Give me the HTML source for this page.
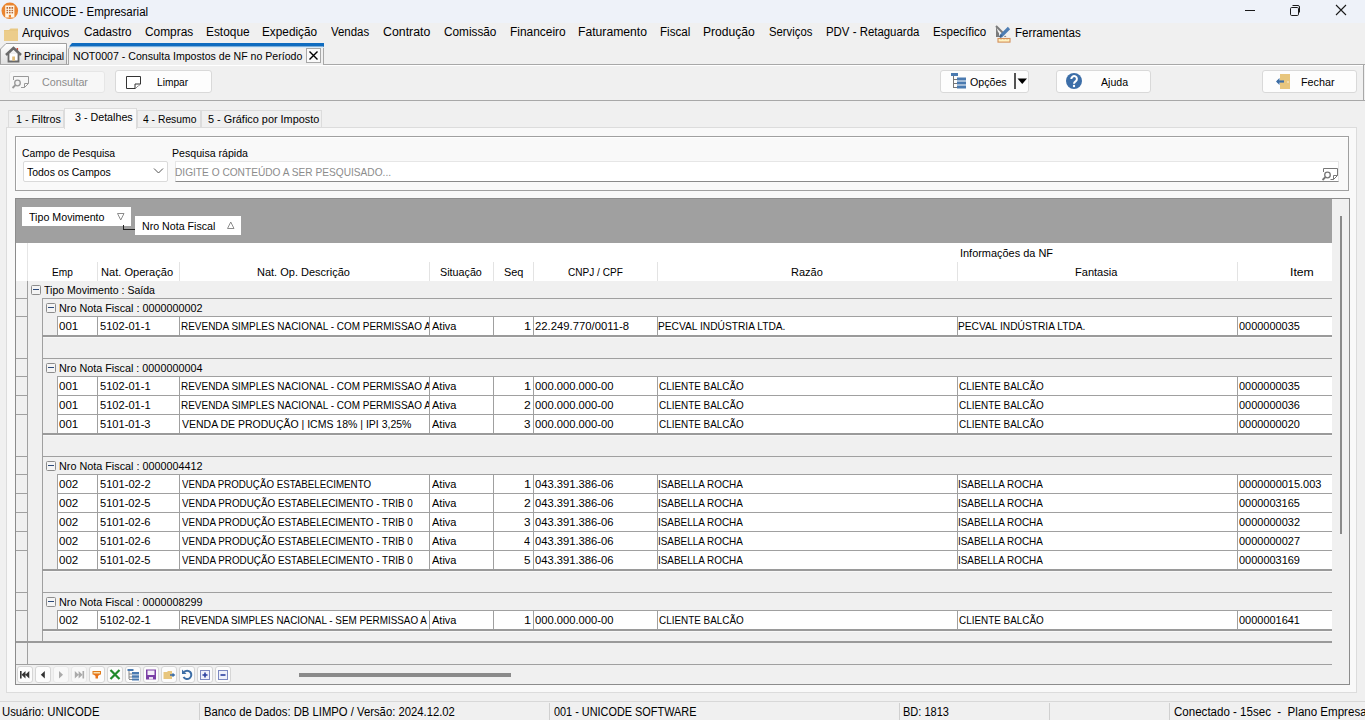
<!DOCTYPE html>
<html><head><meta charset="utf-8"><style>
html,body{margin:0;padding:0;}
body{width:1365px;height:720px;overflow:hidden;position:relative;background:#f0f0f0;font-family:'Liberation Sans', sans-serif;}
.a{position:absolute;}
.t{white-space:pre;transform-origin:0 0;}
</style></head><body>
<div class="a" style="left:0px;top:0px;width:1365px;height:23px;background:#eef2f9;"></div>
<svg class="a" style="left:1px;top:2px" width="18" height="18" viewBox="0 0 18 18"><circle cx="8.8" cy="8.8" r="8.3" fill="#ea8530"/><rect x="4.2" y="3.5" width="9.2" height="12" fill="#fff6e6"/><g fill="#b86a38"><rect x="5.5" y="5" width="1.6" height="1.8"/><rect x="8" y="5" width="1.6" height="1.8"/><rect x="10.5" y="5" width="1.6" height="1.8"/><rect x="5.5" y="7.8" width="1.6" height="1.4"/><rect x="8" y="7.8" width="1.6" height="1.4"/><rect x="10.5" y="7.8" width="1.6" height="1.4"/><rect x="5.5" y="10" width="1.6" height="1.4"/><rect x="8" y="10" width="1.6" height="1.4"/><rect x="10.5" y="10" width="1.6" height="1.4"/></g><rect x="7.8" y="12.8" width="2.2" height="2.7" fill="#ea8530"/></svg>
<div class="a t" style="left:23.11px;top:5.84px;font-size:12px;line-height:12px;color:#000;transform:scaleX(0.9627);">UNICODE - Empresarial</div>
<div class="a" style="left:1245px;top:10px;width:10px;height:1px;background:#1a1a1a;"></div>
<svg class="a" style="left:1288px;top:3px" width="14" height="14" viewBox="0 0 14 14"><rect x="2.5" y="4.5" width="8" height="8" rx="1.2" fill="none" stroke="#1a1a1a" stroke-width="1"/><path d="M4.5 2.5 H10 a1.5 1.5 0 0 1 1.5 1.5 V9.5" fill="none" stroke="#1a1a1a" stroke-width="1"/></svg>
<svg class="a" style="left:1334px;top:3px" width="14" height="14" viewBox="0 0 14 14"><path d="M2 2 L12 12 M12 2 L2 12" stroke="#1a1a1a" stroke-width="1.1"/></svg>
<svg class="a" style="left:3px;top:27px" width="16" height="15" viewBox="0 0 16 15"><path d="M1 3 H6 L7.5 1.5 H15 V14 H1 Z" fill="#e8c883"/><rect x="1" y="4" width="14" height="10" fill="#eccd8b"/></svg>
<div class="a t" style="left:22.18px;top:26.84px;font-size:12px;line-height:12px;color:#000;transform:scaleX(1.0123);">Arquivos</div>
<div class="a t" style="left:83.70px;top:25.84px;font-size:12px;line-height:12px;color:#000;transform:scaleX(0.9773);">Cadastro</div>
<div class="a t" style="left:145.00px;top:25.84px;font-size:12px;line-height:12px;color:#000;transform:scaleX(0.9908);">Compras</div>
<div class="a t" style="left:206.33px;top:25.84px;font-size:12px;line-height:12px;color:#000;transform:scaleX(0.9902);">Estoque</div>
<div class="a t" style="left:262.23px;top:25.84px;font-size:12px;line-height:12px;color:#000;transform:scaleX(0.9826);">Expedição</div>
<div class="a t" style="left:331.25px;top:25.84px;font-size:12px;line-height:12px;color:#000;transform:scaleX(0.9532);">Vendas</div>
<div class="a t" style="left:382.87px;top:25.84px;font-size:12px;line-height:12px;color:#000;transform:scaleX(1.0287);">Contrato</div>
<div class="a t" style="left:443.90px;top:25.84px;font-size:12px;line-height:12px;color:#000;transform:scaleX(0.9821);">Comissão</div>
<div class="a t" style="left:509.52px;top:25.84px;font-size:12px;line-height:12px;color:#000;transform:scaleX(0.9938);">Financeiro</div>
<div class="a t" style="left:578.40px;top:25.84px;font-size:12px;line-height:12px;color:#000;transform:scaleX(1.0144);">Faturamento</div>
<div class="a t" style="left:660.45px;top:25.84px;font-size:12px;line-height:12px;color:#000;transform:scaleX(0.9679);">Fiscal</div>
<div class="a t" style="left:703.41px;top:25.84px;font-size:12px;line-height:12px;color:#000;transform:scaleX(1.0084);">Produção</div>
<div class="a t" style="left:768.89px;top:25.84px;font-size:12px;line-height:12px;color:#000;transform:scaleX(0.9415);">Serviços</div>
<div class="a t" style="left:825.56px;top:25.84px;font-size:12px;line-height:12px;color:#000;transform:scaleX(0.9519);">PDV - Retaguarda</div>
<div class="a t" style="left:932.65px;top:25.84px;font-size:12px;line-height:12px;color:#000;transform:scaleX(0.9616);">Específico</div>
<svg class="a" style="left:995px;top:24px" width="18" height="20" viewBox="0 0 18 20"><path d="M1 2 V13 H7.5 L6 11.5 L4 12 L4 9 L3 8 Z" fill="#7a7a7a"/><path d="M1 2 L9 10" stroke="#7a7a7a" stroke-width="2"/><path d="M9 13 H11.5 L10 11.5 Z" fill="#7a7a7a"/><path d="M5.5 12.5 L14 4" stroke="#4d7db3" stroke-width="3.2"/><path d="M5 13.5 L6.5 11" stroke="#3a5f8a" stroke-width="1.5"/><rect x="3" y="14.5" width="12" height="3.6" fill="#fff2c0" stroke="#d4905a" stroke-width="1.1"/><path d="M6 14.5 V15.6 M9 14.5 V15.6 M12 14.5 V15.6" stroke="#d4905a" stroke-width="0.8"/></svg>
<div class="a t" style="left:1014.75px;top:26.84px;font-size:12px;line-height:12px;color:#000;transform:scaleX(0.9654);">Ferramentas</div>
<svg class="a" style="left:0px;top:43px" width="68" height="22" viewBox="0 0 68 22"><defs><linearGradient id="pg" x1="0" y1="0" x2="0" y2="1"><stop offset="0" stop-color="#ffffff"/><stop offset="1" stop-color="#dedede"/></linearGradient></defs><path d="M0.5 21.5 V6 L6 0.5 H66.5 V21.5 Z" fill="url(#pg)" stroke="#a0a0a0" stroke-width="1"/></svg>
<svg class="a" style="left:5px;top:46px" width="17" height="17" viewBox="0 0 17 17"><rect x="11.5" y="2" width="1.6" height="4" fill="#d04b3a"/><path d="M3.5 8 V15.5 H13.5 V8" fill="#fff" stroke="#6a6a6a" stroke-width="1.8"/><path d="M1 9 L8.5 2 L16 9" fill="none" stroke="#6a6a6a" stroke-width="2.6"/><rect x="7.2" y="10.5" width="2.8" height="4.2" fill="#e2be7a"/></svg>
<div class="a t" style="left:24.14px;top:50.69px;font-size:11px;line-height:11px;color:#000;transform:scaleX(0.9495);">Principal</div>
<svg class="a" style="left:66px;top:42px" width="260" height="24" viewBox="0 0 260 24"><path d="M2.5 23 V7 L7.5 1.5 H257.5 V23" fill="#f0f0f0" stroke="#a8a8a8" stroke-width="1"/><path d="M6 1 H258 V4.5 H3 Z" fill="#0f6cc0"/><rect x="5" y="5" width="253" height="1" fill="#d8ecfa"/></svg>
<div class="a t" style="left:73.13px;top:50.69px;font-size:11px;line-height:11px;color:#000;transform:scaleX(0.9617);">NOT0007 - Consulta Impostos de NF no Período</div>
<svg class="a" style="left:306px;top:48px" width="16" height="16" viewBox="0 0 16 16"><rect x="0.5" y="0.5" width="14" height="14" fill="#fafafa" stroke="#a8a8a8"/><path d="M3.5 3.5 L11.5 11.5 M11.5 3.5 L3.5 11.5" stroke="#000" stroke-width="1.4"/></svg>
<div class="a" style="left:0px;top:64px;width:68px;height:1px;background:#a8a8a8;"></div>
<div class="a" style="left:323px;top:64px;width:1042px;height:1px;background:#a8a8a8;"></div>
<div class="a" style="left:0px;top:65px;width:1364px;height:1px;background:#ffffff;"></div>
<div class="a" style="left:0px;top:100px;width:1365px;height:1px;background:#a8a8a8;"></div>
<div class="a" style="left:1363px;top:64px;width:1px;height:37px;background:#a8a8a8;"></div>
<div class="a" style="left:9px;top:71px;width:96px;height:22px;background:#f7f7f7;border:1px solid #e6e6e6;box-sizing:border-box;border-radius:3px;"></div>
<svg class="a" style="left:11px;top:75px" width="18" height="15" viewBox="0 0 18 15"><path d="M2.5 5 V1.5 H17.5 V8.5 L13.5 12.5 H10" fill="none" stroke="#999" stroke-width="1"/><path d="M17.5 8.5 H13.5 V12.5" fill="none" stroke="#999"/><circle cx="6.5" cy="8" r="2.8" fill="#f4f4f4" stroke="#999" stroke-width="1.3"/><path d="M4.5 10 L1.5 13" stroke="#999" stroke-width="1.8"/></svg>
<div class="a t" style="left:42.16px;top:76.69px;font-size:11px;line-height:11px;color:#8c8c8c;transform:scaleX(0.9755);">Consultar</div>
<div class="a" style="left:115px;top:70px;width:97px;height:23px;background:#fdfdfd;border:1px solid #d9d9d9;box-sizing:border-box;border-radius:3px;"></div>
<svg class="a" style="left:125px;top:75px" width="17" height="15" viewBox="0 0 17 15"><path d="M1.5 1.5 H15.5 V9 L10 13.5 H1.5 Z" fill="#fff" stroke="#333" stroke-width="1"/><path d="M15.5 9 H10 V13.5" fill="#fff" stroke="#333"/></svg>
<div class="a t" style="left:156.87px;top:76.69px;font-size:11px;line-height:11px;color:#000;transform:scaleX(0.9251);">Limpar</div>
<div class="a" style="left:940px;top:70px;width:89px;height:23px;background:#fdfdfd;border:1px solid #d9d9d9;box-sizing:border-box;border-radius:3px;"></div>
<svg class="a" style="left:950px;top:72px" width="17" height="18" viewBox="0 0 17 18"><path d="M3.5 3 V16 M3.5 7.5 H7 M3.5 11.5 H7 M3.5 15.5 H7" stroke="#777" stroke-width="1"/><rect x="1" y="1" width="7" height="3" fill="#4a7ab0"/><rect x="7" y="5.5" width="9" height="3" fill="#4a7ab0"/><rect x="7" y="9.5" width="9" height="3" fill="#4a7ab0"/><rect x="7" y="13.5" width="9" height="3" fill="#4a7ab0"/></svg>
<div class="a t" style="left:969.90px;top:76.69px;font-size:11px;line-height:11px;color:#000;transform:scaleX(0.9678);">Opções</div>
<div class="a" style="left:1014px;top:73px;width:2px;height:16px;background:#555;"></div>
<svg class="a" style="left:1017px;top:78px" width="11" height="7" viewBox="0 0 11 7"><path d="M0.5 0.5 H10 L5.25 6 Z" fill="#000"/></svg>
<div class="a" style="left:1056px;top:70px;width:95px;height:23px;background:#fdfdfd;border:1px solid #d9d9d9;box-sizing:border-box;border-radius:3px;"></div>
<svg class="a" style="left:1065px;top:72px" width="18" height="18" viewBox="0 0 18 18"><circle cx="9" cy="9" r="8" fill="#3c6ea8"/><path d="M6.3 7 a2.8 2.8 0 1 1 4.3 2.3 c-1 0.7 -1.6 1.1 -1.6 2.4" fill="none" stroke="#fff" stroke-width="2"/><circle cx="9" cy="14" r="1.2" fill="#fff"/></svg>
<div class="a t" style="left:1100.98px;top:76.69px;font-size:11px;line-height:11px;color:#000;transform:scaleX(0.9604);">Ajuda</div>
<div class="a" style="left:1262px;top:70px;width:95px;height:23px;background:#fdfdfd;border:1px solid #d9d9d9;box-sizing:border-box;border-radius:3px;"></div>
<svg class="a" style="left:1275px;top:73px" width="17" height="17" viewBox="0 0 17 17"><rect x="5" y="1" width="10" height="15" fill="#e8c67d"/><circle cx="13" cy="9" r="0.7" fill="#fff"/><path d="M2 8.5 H9" stroke="#3d6ea6" stroke-width="2.2"/><path d="M1 8.5 L4.5 5 V12 Z" fill="#3d6ea6"/></svg>
<div class="a t" style="left:1300.72px;top:76.69px;font-size:11px;line-height:11px;color:#000;transform:scaleX(0.9774);">Fechar</div>
<div class="a" style="left:6px;top:127px;width:1351px;height:566px;background:#f9f9f9;border:1px solid #dcdcdc;box-sizing:border-box;"></div>
<div class="a" style="left:8px;top:110px;width:56px;height:18px;background:#f0f0f0;border:1px solid #dcdcdc;box-sizing:border-box;"></div>
<div class="a t" style="left:15.88px;top:113.69px;font-size:11px;line-height:11px;color:#000;transform:scaleX(0.9775);">1 - Filtros</div>
<div class="a" style="left:137px;top:110px;width:64px;height:18px;background:#f0f0f0;border:1px solid #dcdcdc;box-sizing:border-box;"></div>
<div class="a t" style="left:143.06px;top:113.69px;font-size:11px;line-height:11px;color:#000;transform:scaleX(0.9387);">4 - Resumo</div>
<div class="a" style="left:201px;top:110px;width:121px;height:18px;background:#f0f0f0;border:1px solid #dcdcdc;box-sizing:border-box;"></div>
<div class="a t" style="left:208.36px;top:113.69px;font-size:11px;line-height:11px;color:#000;transform:scaleX(0.9894);">5 - Gráfico por Imposto</div>
<div class="a" style="left:64px;top:108px;width:73px;height:21px;background:#f9f9f9;border:1px solid #dcdcdc;box-sizing:border-box;border-bottom:none;"></div>
<div class="a t" style="left:74.89px;top:111.69px;font-size:11px;line-height:11px;color:#000;transform:scaleX(0.9728);">3 - Detalhes</div>
<div class="a" style="left:15px;top:136px;width:1334px;height:55px;border:1px solid #a0a0a0;box-sizing:border-box;box-shadow: inset 1px 1px 0 #fff;"></div>
<div class="a t" style="left:22.17px;top:147.69px;font-size:11px;line-height:11px;color:#000;transform:scaleX(0.9401);">Campo de Pesquisa</div>
<div class="a t" style="left:172.33px;top:147.69px;font-size:11px;line-height:11px;color:#000;transform:scaleX(0.9630);">Pesquisa rápida</div>
<div class="a" style="left:23px;top:161px;width:145px;height:21px;background:#ffffff;border:1px solid #dadada;box-sizing:border-box;border-radius:2px;"></div>
<div class="a t" style="left:26.87px;top:166.69px;font-size:11px;line-height:11px;color:#000;transform:scaleX(0.9508);">Todos os Campos</div>
<svg class="a" style="left:153px;top:167px" width="11" height="8" viewBox="0 0 11 8"><path d="M1 1.5 L5.5 6 L10 1.5" fill="none" stroke="#555" stroke-width="1"/></svg>
<div class="a" style="left:175px;top:161px;width:1164px;height:21px;background:#ffffff;border:1px solid #e6e6e6;box-sizing:border-box;border-bottom:1px solid #8a8a8a;"></div>
<div class="a t" style="left:175.47px;top:166.69px;font-size:11px;line-height:11px;color:#8c8c8c;transform:scaleX(0.9229);">DIGITE O CONTEÚDO A SER PESQUISADO...</div>
<svg class="a" style="left:1321px;top:167px" width="18" height="15" viewBox="0 0 18 15"><path d="M2.5 5 V1.5 H16.5 V8.5 L12.5 12.5 H9.5" fill="none" stroke="#777" stroke-width="1"/><path d="M16.5 8.5 H12.5 V12.5" fill="none" stroke="#777"/><circle cx="6.5" cy="8" r="2.8" fill="#fff" stroke="#777" stroke-width="1.3"/><path d="M4.5 10 L1.5 13" stroke="#777" stroke-width="1.8"/></svg>
<div class="a" style="left:15px;top:198px;width:1335px;height:487px;background:#f0f0f0;border:1px solid #8c8c8c;box-sizing:border-box;"></div>
<div class="a" style="left:16px;top:199px;width:1316px;height:44px;background:#a0a0a0;"></div>
<div class="a" style="left:22px;top:207px;width:109px;height:19px;background:#ffffff;"></div>
<div class="a t" style="left:28.76px;top:211.69px;font-size:11px;line-height:11px;color:#000;transform:scaleX(0.9697);">Tipo Movimento</div>
<svg class="a" style="left:116px;top:212px" width="9" height="9" viewBox="0 0 9 9"><path d="M1.5 1.5 H8 L4.75 8 Z" fill="none" stroke="#808080" stroke-width="0.9"/></svg>
<div class="a" style="left:123px;top:225px;width:1px;height:5px;background:#222;"></div>
<div class="a" style="left:123px;top:229px;width:12px;height:1px;background:#222;"></div>
<div class="a" style="left:135px;top:216px;width:106px;height:19px;background:#ffffff;"></div>
<div class="a t" style="left:141.63px;top:220.69px;font-size:11px;line-height:11px;color:#000;transform:scaleX(0.9682);">Nro Nota Fiscal</div>
<svg class="a" style="left:226px;top:221px" width="9" height="9" viewBox="0 0 9 9"><path d="M1.5 7.5 H8 L4.75 1 Z" fill="none" stroke="#808080" stroke-width="0.9"/></svg>
<div class="a" style="left:1332px;top:199px;width:17px;height:466px;background:#f0f0f0;"></div>
<div class="a" style="left:1340px;top:216px;width:2px;height:318px;background:#8a8a8a;"></div>
<div class="a" style="left:16px;top:243px;width:1316px;height:38px;background:#ffffff;"></div>
<div class="a t" style="left:960.19px;top:247.69px;font-size:11px;line-height:11px;color:#000;transform:scaleX(0.9937);">Informações da NF</div>
<div class="a" style="left:97px;top:262px;width:1px;height:19px;background:#e3e3e3;"></div>
<div class="a" style="left:179px;top:262px;width:1px;height:19px;background:#e3e3e3;"></div>
<div class="a" style="left:429px;top:262px;width:1px;height:19px;background:#e3e3e3;"></div>
<div class="a" style="left:493px;top:262px;width:1px;height:19px;background:#e3e3e3;"></div>
<div class="a" style="left:533px;top:262px;width:1px;height:19px;background:#e3e3e3;"></div>
<div class="a" style="left:657px;top:262px;width:1px;height:19px;background:#e3e3e3;"></div>
<div class="a" style="left:957px;top:262px;width:1px;height:19px;background:#e3e3e3;"></div>
<div class="a" style="left:1237px;top:262px;width:1px;height:19px;background:#e3e3e3;"></div>
<div class="a t" style="left:51.57px;top:266.69px;font-size:11px;line-height:11px;color:#000;transform:scaleX(0.9222);">Emp</div>
<div class="a t" style="left:101.39px;top:266.69px;font-size:11px;line-height:11px;color:#000;transform:scaleX(1.0075);">Nat. Operação</div>
<div class="a t" style="left:257.10px;top:266.69px;font-size:11px;line-height:11px;color:#000;transform:scaleX(0.9994);">Nat. Op. Descrição</div>
<div class="a t" style="left:439.81px;top:266.69px;font-size:11px;line-height:11px;color:#000;transform:scaleX(0.9774);">Situação</div>
<div class="a t" style="left:503.71px;top:266.69px;font-size:11px;line-height:11px;color:#000;transform:scaleX(0.9908);">Seq</div>
<div class="a t" style="left:567.89px;top:266.69px;font-size:11px;line-height:11px;color:#000;transform:scaleX(0.9152);">CNPJ / CPF</div>
<div class="a t" style="left:791.10px;top:266.69px;font-size:11px;line-height:11px;color:#000;transform:scaleX(0.9989);">Razão</div>
<div class="a t" style="left:1075.09px;top:266.69px;font-size:11px;line-height:11px;color:#000;transform:scaleX(1.0051);">Fantasia</div>
<div class="a t" style="left:1290.07px;top:266.69px;font-size:11px;line-height:11px;color:#000;transform:scaleX(1.1093);">Item</div>
<div class="a" style="left:27px;top:243px;width:1px;height:38px;background:#e6e6e6;"></div>
<div class="a" style="left:27px;top:281px;width:1px;height:383px;background:#a0a0a0;"></div>
<svg class="a" style="left:31px;top:285px" width="10" height="10" viewBox="0 0 10 10"><rect x="0.5" y="0.5" width="9" height="9" rx="1" fill="#f4f4f4" stroke="#8c8c8c"/><path d="M2 4.5 H8" stroke="#2c4a7a" stroke-width="1"/></svg>
<div class="a t" style="left:44.16px;top:284.69px;font-size:11px;line-height:11px;color:#000;transform:scaleX(0.9584);">Tipo Movimento : Saída</div>
<div class="a" style="left:42px;top:298px;width:1px;height:343px;background:#a0a0a0;"></div>
<div class="a" style="left:42px;top:298px;width:1290px;height:1px;background:#a0a0a0;"></div>
<div class="a" style="left:16px;top:298px;width:11px;height:1px;background:#a0a0a0;"></div>
<svg class="a" style="left:46px;top:303px" width="10" height="10" viewBox="0 0 10 10"><rect x="0.5" y="0.5" width="9" height="9" rx="1" fill="#f4f4f4" stroke="#8c8c8c"/><path d="M2 4.5 H8" stroke="#2c4a7a" stroke-width="1"/></svg>
<div class="a t" style="left:58.71px;top:302.69px;font-size:11px;line-height:11px;color:#000;transform:scaleX(0.9828);">Nro Nota Fiscal : 0000000002</div>
<div class="a" style="left:57px;top:316px;width:1275px;height:19px;background:#ffffff;"></div>
<div class="a" style="left:57px;top:316px;width:1275px;height:1px;background:#a0a0a0;"></div>
<div class="a" style="left:16px;top:316px;width:11px;height:1px;background:#a0a0a0;"></div>
<div class="a t" style="left:59.15px;top:320.69px;font-size:11px;line-height:11px;color:#000;transform:scaleX(1.0468);">001</div>
<div class="a t" style="left:99.96px;top:320.69px;font-size:11px;line-height:11px;color:#000;transform:scaleX(1.0087);">5102-01-1</div>
<div class="a" style="left:180px;top:316px;width:249px;height:19px;overflow:hidden">
<div class="a t" style="left:0.88px;top:4.69px;font-size:11px;line-height:11px;color:#000;transform:scaleX(0.9057);">REVENDA SIMPLES NACIONAL - COM PERMISSAO A</div>
</div>
<div class="a t" style="left:431.58px;top:320.69px;font-size:11px;line-height:11px;color:#000;transform:scaleX(0.9986);">Ativa</div>
<div class="a t" style="left:523.53px;top:320.69px;font-size:11px;line-height:11px;color:#000;transform:scaleX(1.1597);">1</div>
<div class="a t" style="left:535.23px;top:320.69px;font-size:11px;line-height:11px;color:#000;transform:scaleX(1.0264);">22.249.770/0011-8</div>
<div class="a t" style="left:658.46px;top:320.69px;font-size:11px;line-height:11px;color:#000;transform:scaleX(0.9279);">PECVAL INDÚSTRIA LTDA.</div>
<div class="a t" style="left:958.46px;top:320.69px;font-size:11px;line-height:11px;color:#000;transform:scaleX(0.9279);">PECVAL INDÚSTRIA LTDA.</div>
<div class="a t" style="left:1239.27px;top:320.69px;font-size:11px;line-height:11px;color:#000;transform:scaleX(0.9953);">0000000035</div>
<div class="a" style="left:57px;top:316px;width:1px;height:19px;background:#a0a0a0;"></div>
<div class="a" style="left:97px;top:316px;width:1px;height:19px;background:#a0a0a0;"></div>
<div class="a" style="left:179px;top:316px;width:1px;height:19px;background:#a0a0a0;"></div>
<div class="a" style="left:429px;top:316px;width:1px;height:19px;background:#a0a0a0;"></div>
<div class="a" style="left:493px;top:316px;width:1px;height:19px;background:#a0a0a0;"></div>
<div class="a" style="left:533px;top:316px;width:1px;height:19px;background:#a0a0a0;"></div>
<div class="a" style="left:657px;top:316px;width:1px;height:19px;background:#a0a0a0;"></div>
<div class="a" style="left:957px;top:316px;width:1px;height:19px;background:#a0a0a0;"></div>
<div class="a" style="left:1237px;top:316px;width:1px;height:19px;background:#a0a0a0;"></div>
<div class="a" style="left:42px;top:335px;width:1290px;height:2px;background:#9a9a9a;"></div>
<div class="a" style="left:43px;top:337px;width:1289px;height:1px;background:#f8f8f8;"></div>
<div class="a" style="left:42px;top:358px;width:1290px;height:1px;background:#a0a0a0;"></div>
<div class="a" style="left:16px;top:358px;width:11px;height:1px;background:#a0a0a0;"></div>
<svg class="a" style="left:46px;top:363px" width="10" height="10" viewBox="0 0 10 10"><rect x="0.5" y="0.5" width="9" height="9" rx="1" fill="#f4f4f4" stroke="#8c8c8c"/><path d="M2 4.5 H8" stroke="#2c4a7a" stroke-width="1"/></svg>
<div class="a t" style="left:58.71px;top:362.69px;font-size:11px;line-height:11px;color:#000;transform:scaleX(0.9812);">Nro Nota Fiscal : 0000000004</div>
<div class="a" style="left:57px;top:376px;width:1275px;height:57px;background:#ffffff;"></div>
<div class="a" style="left:57px;top:376px;width:1275px;height:1px;background:#a0a0a0;"></div>
<div class="a" style="left:16px;top:376px;width:11px;height:1px;background:#a0a0a0;"></div>
<div class="a t" style="left:59.15px;top:380.69px;font-size:11px;line-height:11px;color:#000;transform:scaleX(1.0468);">001</div>
<div class="a t" style="left:99.96px;top:380.69px;font-size:11px;line-height:11px;color:#000;transform:scaleX(1.0087);">5102-01-1</div>
<div class="a" style="left:180px;top:376px;width:249px;height:19px;overflow:hidden">
<div class="a t" style="left:0.88px;top:4.69px;font-size:11px;line-height:11px;color:#000;transform:scaleX(0.9057);">REVENDA SIMPLES NACIONAL - COM PERMISSAO A</div>
</div>
<div class="a t" style="left:431.58px;top:380.69px;font-size:11px;line-height:11px;color:#000;transform:scaleX(0.9986);">Ativa</div>
<div class="a t" style="left:523.53px;top:380.69px;font-size:11px;line-height:11px;color:#000;transform:scaleX(1.1597);">1</div>
<div class="a t" style="left:535.36px;top:380.69px;font-size:11px;line-height:11px;color:#000;transform:scaleX(1.0182);">000.000.000-00</div>
<div class="a t" style="left:658.80px;top:380.69px;font-size:11px;line-height:11px;color:#000;transform:scaleX(0.8995);">CLIENTE BALCÃO</div>
<div class="a t" style="left:958.80px;top:380.69px;font-size:11px;line-height:11px;color:#000;transform:scaleX(0.8995);">CLIENTE BALCÃO</div>
<div class="a t" style="left:1239.27px;top:380.69px;font-size:11px;line-height:11px;color:#000;transform:scaleX(0.9953);">0000000035</div>
<div class="a" style="left:57px;top:395px;width:1275px;height:1px;background:#a0a0a0;"></div>
<div class="a" style="left:16px;top:395px;width:11px;height:1px;background:#a0a0a0;"></div>
<div class="a t" style="left:59.15px;top:399.69px;font-size:11px;line-height:11px;color:#000;transform:scaleX(1.0468);">001</div>
<div class="a t" style="left:99.96px;top:399.69px;font-size:11px;line-height:11px;color:#000;transform:scaleX(1.0087);">5102-01-1</div>
<div class="a" style="left:180px;top:395px;width:249px;height:19px;overflow:hidden">
<div class="a t" style="left:0.88px;top:4.69px;font-size:11px;line-height:11px;color:#000;transform:scaleX(0.9057);">REVENDA SIMPLES NACIONAL - COM PERMISSAO A</div>
</div>
<div class="a t" style="left:431.58px;top:399.69px;font-size:11px;line-height:11px;color:#000;transform:scaleX(0.9986);">Ativa</div>
<div class="a t" style="left:523.89px;top:399.69px;font-size:11px;line-height:11px;color:#000;transform:scaleX(1.0975);">2</div>
<div class="a t" style="left:535.36px;top:399.69px;font-size:11px;line-height:11px;color:#000;transform:scaleX(1.0182);">000.000.000-00</div>
<div class="a t" style="left:658.80px;top:399.69px;font-size:11px;line-height:11px;color:#000;transform:scaleX(0.8995);">CLIENTE BALCÃO</div>
<div class="a t" style="left:958.80px;top:399.69px;font-size:11px;line-height:11px;color:#000;transform:scaleX(0.8995);">CLIENTE BALCÃO</div>
<div class="a t" style="left:1239.27px;top:399.69px;font-size:11px;line-height:11px;color:#000;transform:scaleX(0.9956);">0000000036</div>
<div class="a" style="left:57px;top:414px;width:1275px;height:1px;background:#a0a0a0;"></div>
<div class="a" style="left:16px;top:414px;width:11px;height:1px;background:#a0a0a0;"></div>
<div class="a t" style="left:59.15px;top:418.69px;font-size:11px;line-height:11px;color:#000;transform:scaleX(1.0468);">001</div>
<div class="a t" style="left:99.96px;top:418.69px;font-size:11px;line-height:11px;color:#000;transform:scaleX(1.0076);">5101-01-3</div>
<div class="a" style="left:180px;top:414px;width:249px;height:19px;overflow:hidden">
<div class="a t" style="left:1.65px;top:4.69px;font-size:11px;line-height:11px;color:#000;transform:scaleX(0.9542);">VENDA DE PRODUÇÃO | ICMS 18% | IPI 3,25%</div>
</div>
<div class="a t" style="left:431.58px;top:418.69px;font-size:11px;line-height:11px;color:#000;transform:scaleX(0.9986);">Ativa</div>
<div class="a t" style="left:524.06px;top:418.69px;font-size:11px;line-height:11px;color:#000;transform:scaleX(1.0546);">3</div>
<div class="a t" style="left:535.36px;top:418.69px;font-size:11px;line-height:11px;color:#000;transform:scaleX(1.0182);">000.000.000-00</div>
<div class="a t" style="left:658.80px;top:418.69px;font-size:11px;line-height:11px;color:#000;transform:scaleX(0.8995);">CLIENTE BALCÃO</div>
<div class="a t" style="left:958.80px;top:418.69px;font-size:11px;line-height:11px;color:#000;transform:scaleX(0.8995);">CLIENTE BALCÃO</div>
<div class="a t" style="left:1239.27px;top:418.69px;font-size:11px;line-height:11px;color:#000;transform:scaleX(0.9947);">0000000020</div>
<div class="a" style="left:57px;top:376px;width:1px;height:57px;background:#a0a0a0;"></div>
<div class="a" style="left:97px;top:376px;width:1px;height:57px;background:#a0a0a0;"></div>
<div class="a" style="left:179px;top:376px;width:1px;height:57px;background:#a0a0a0;"></div>
<div class="a" style="left:429px;top:376px;width:1px;height:57px;background:#a0a0a0;"></div>
<div class="a" style="left:493px;top:376px;width:1px;height:57px;background:#a0a0a0;"></div>
<div class="a" style="left:533px;top:376px;width:1px;height:57px;background:#a0a0a0;"></div>
<div class="a" style="left:657px;top:376px;width:1px;height:57px;background:#a0a0a0;"></div>
<div class="a" style="left:957px;top:376px;width:1px;height:57px;background:#a0a0a0;"></div>
<div class="a" style="left:1237px;top:376px;width:1px;height:57px;background:#a0a0a0;"></div>
<div class="a" style="left:42px;top:433px;width:1290px;height:2px;background:#9a9a9a;"></div>
<div class="a" style="left:43px;top:435px;width:1289px;height:1px;background:#f8f8f8;"></div>
<div class="a" style="left:42px;top:456px;width:1290px;height:1px;background:#a0a0a0;"></div>
<div class="a" style="left:16px;top:456px;width:11px;height:1px;background:#a0a0a0;"></div>
<svg class="a" style="left:46px;top:461px" width="10" height="10" viewBox="0 0 10 10"><rect x="0.5" y="0.5" width="9" height="9" rx="1" fill="#f4f4f4" stroke="#8c8c8c"/><path d="M2 4.5 H8" stroke="#2c4a7a" stroke-width="1"/></svg>
<div class="a t" style="left:58.71px;top:460.69px;font-size:11px;line-height:11px;color:#000;transform:scaleX(0.9828);">Nro Nota Fiscal : 0000004412</div>
<div class="a" style="left:57px;top:474px;width:1275px;height:95px;background:#ffffff;"></div>
<div class="a" style="left:57px;top:474px;width:1275px;height:1px;background:#a0a0a0;"></div>
<div class="a" style="left:16px;top:474px;width:11px;height:1px;background:#a0a0a0;"></div>
<div class="a t" style="left:59.15px;top:478.69px;font-size:11px;line-height:11px;color:#000;transform:scaleX(1.0478);">002</div>
<div class="a t" style="left:99.96px;top:478.69px;font-size:11px;line-height:11px;color:#000;transform:scaleX(1.0090);">5101-02-2</div>
<div class="a" style="left:180px;top:474px;width:249px;height:19px;overflow:hidden">
<div class="a t" style="left:1.66px;top:4.69px;font-size:11px;line-height:11px;color:#000;transform:scaleX(0.8850);">VENDA PRODUÇÃO ESTABELECIMENTO</div>
</div>
<div class="a t" style="left:431.58px;top:478.69px;font-size:11px;line-height:11px;color:#000;transform:scaleX(0.9986);">Ativa</div>
<div class="a t" style="left:523.53px;top:478.69px;font-size:11px;line-height:11px;color:#000;transform:scaleX(1.1597);">1</div>
<div class="a t" style="left:535.36px;top:478.69px;font-size:11px;line-height:11px;color:#000;transform:scaleX(1.0176);">043.391.386-06</div>
<div class="a t" style="left:658.38px;top:478.69px;font-size:11px;line-height:11px;color:#000;transform:scaleX(0.9016);">ISABELLA ROCHA</div>
<div class="a t" style="left:958.38px;top:478.69px;font-size:11px;line-height:11px;color:#000;transform:scaleX(0.9016);">ISABELLA ROCHA</div>
<div class="a t" style="left:1239.27px;top:478.69px;font-size:11px;line-height:11px;color:#000;transform:scaleX(0.9979);">0000000015.003</div>
<div class="a" style="left:57px;top:493px;width:1275px;height:1px;background:#a0a0a0;"></div>
<div class="a" style="left:16px;top:493px;width:11px;height:1px;background:#a0a0a0;"></div>
<div class="a t" style="left:59.15px;top:497.69px;font-size:11px;line-height:11px;color:#000;transform:scaleX(1.0478);">002</div>
<div class="a t" style="left:99.96px;top:497.69px;font-size:11px;line-height:11px;color:#000;transform:scaleX(1.0072);">5101-02-5</div>
<div class="a" style="left:180px;top:493px;width:249px;height:19px;overflow:hidden">
<div class="a t" style="left:1.66px;top:4.69px;font-size:11px;line-height:11px;color:#000;transform:scaleX(0.8969);">VENDA PRODUÇÃO ESTABELECIMENTO - TRIB 0</div>
</div>
<div class="a t" style="left:431.58px;top:497.69px;font-size:11px;line-height:11px;color:#000;transform:scaleX(0.9986);">Ativa</div>
<div class="a t" style="left:523.89px;top:497.69px;font-size:11px;line-height:11px;color:#000;transform:scaleX(1.0975);">2</div>
<div class="a t" style="left:535.36px;top:497.69px;font-size:11px;line-height:11px;color:#000;transform:scaleX(1.0176);">043.391.386-06</div>
<div class="a t" style="left:658.38px;top:497.69px;font-size:11px;line-height:11px;color:#000;transform:scaleX(0.9016);">ISABELLA ROCHA</div>
<div class="a t" style="left:958.38px;top:497.69px;font-size:11px;line-height:11px;color:#000;transform:scaleX(0.9016);">ISABELLA ROCHA</div>
<div class="a t" style="left:1239.27px;top:497.69px;font-size:11px;line-height:11px;color:#000;transform:scaleX(0.9953);">0000003165</div>
<div class="a" style="left:57px;top:512px;width:1275px;height:1px;background:#a0a0a0;"></div>
<div class="a" style="left:16px;top:512px;width:11px;height:1px;background:#a0a0a0;"></div>
<div class="a t" style="left:59.15px;top:516.69px;font-size:11px;line-height:11px;color:#000;transform:scaleX(1.0478);">002</div>
<div class="a t" style="left:99.96px;top:516.69px;font-size:11px;line-height:11px;color:#000;transform:scaleX(1.0076);">5101-02-6</div>
<div class="a" style="left:180px;top:512px;width:249px;height:19px;overflow:hidden">
<div class="a t" style="left:1.66px;top:4.69px;font-size:11px;line-height:11px;color:#000;transform:scaleX(0.8969);">VENDA PRODUÇÃO ESTABELECIMENTO - TRIB 0</div>
</div>
<div class="a t" style="left:431.58px;top:516.69px;font-size:11px;line-height:11px;color:#000;transform:scaleX(0.9986);">Ativa</div>
<div class="a t" style="left:524.06px;top:516.69px;font-size:11px;line-height:11px;color:#000;transform:scaleX(1.0546);">3</div>
<div class="a t" style="left:535.36px;top:516.69px;font-size:11px;line-height:11px;color:#000;transform:scaleX(1.0176);">043.391.386-06</div>
<div class="a t" style="left:658.38px;top:516.69px;font-size:11px;line-height:11px;color:#000;transform:scaleX(0.9016);">ISABELLA ROCHA</div>
<div class="a t" style="left:958.38px;top:516.69px;font-size:11px;line-height:11px;color:#000;transform:scaleX(0.9016);">ISABELLA ROCHA</div>
<div class="a t" style="left:1239.27px;top:516.69px;font-size:11px;line-height:11px;color:#000;transform:scaleX(0.9968);">0000000032</div>
<div class="a" style="left:57px;top:531px;width:1275px;height:1px;background:#a0a0a0;"></div>
<div class="a" style="left:16px;top:531px;width:11px;height:1px;background:#a0a0a0;"></div>
<div class="a t" style="left:59.15px;top:535.69px;font-size:11px;line-height:11px;color:#000;transform:scaleX(1.0478);">002</div>
<div class="a t" style="left:99.96px;top:535.69px;font-size:11px;line-height:11px;color:#000;transform:scaleX(1.0076);">5101-02-6</div>
<div class="a" style="left:180px;top:531px;width:249px;height:19px;overflow:hidden">
<div class="a t" style="left:1.66px;top:4.69px;font-size:11px;line-height:11px;color:#000;transform:scaleX(0.8969);">VENDA PRODUÇÃO ESTABELECIMENTO - TRIB 0</div>
</div>
<div class="a t" style="left:431.58px;top:535.69px;font-size:11px;line-height:11px;color:#000;transform:scaleX(0.9986);">Ativa</div>
<div class="a t" style="left:524.25px;top:535.69px;font-size:11px;line-height:11px;color:#000;transform:scaleX(0.9922);">4</div>
<div class="a t" style="left:535.36px;top:535.69px;font-size:11px;line-height:11px;color:#000;transform:scaleX(1.0176);">043.391.386-06</div>
<div class="a t" style="left:658.38px;top:535.69px;font-size:11px;line-height:11px;color:#000;transform:scaleX(0.9016);">ISABELLA ROCHA</div>
<div class="a t" style="left:958.38px;top:535.69px;font-size:11px;line-height:11px;color:#000;transform:scaleX(0.9016);">ISABELLA ROCHA</div>
<div class="a t" style="left:1239.27px;top:535.69px;font-size:11px;line-height:11px;color:#000;transform:scaleX(0.9968);">0000000027</div>
<div class="a" style="left:57px;top:550px;width:1275px;height:1px;background:#a0a0a0;"></div>
<div class="a" style="left:16px;top:550px;width:11px;height:1px;background:#a0a0a0;"></div>
<div class="a t" style="left:59.15px;top:554.69px;font-size:11px;line-height:11px;color:#000;transform:scaleX(1.0478);">002</div>
<div class="a t" style="left:99.96px;top:554.69px;font-size:11px;line-height:11px;color:#000;transform:scaleX(1.0072);">5101-02-5</div>
<div class="a" style="left:180px;top:550px;width:249px;height:19px;overflow:hidden">
<div class="a t" style="left:1.66px;top:4.69px;font-size:11px;line-height:11px;color:#000;transform:scaleX(0.8969);">VENDA PRODUÇÃO ESTABELECIMENTO - TRIB 0</div>
</div>
<div class="a t" style="left:431.58px;top:554.69px;font-size:11px;line-height:11px;color:#000;transform:scaleX(0.9986);">Ativa</div>
<div class="a t" style="left:524.04px;top:554.69px;font-size:11px;line-height:11px;color:#000;transform:scaleX(1.0546);">5</div>
<div class="a t" style="left:535.36px;top:554.69px;font-size:11px;line-height:11px;color:#000;transform:scaleX(1.0176);">043.391.386-06</div>
<div class="a t" style="left:658.38px;top:554.69px;font-size:11px;line-height:11px;color:#000;transform:scaleX(0.9016);">ISABELLA ROCHA</div>
<div class="a t" style="left:958.38px;top:554.69px;font-size:11px;line-height:11px;color:#000;transform:scaleX(0.9016);">ISABELLA ROCHA</div>
<div class="a t" style="left:1239.27px;top:554.69px;font-size:11px;line-height:11px;color:#000;transform:scaleX(0.9962);">0000003169</div>
<div class="a" style="left:57px;top:474px;width:1px;height:95px;background:#a0a0a0;"></div>
<div class="a" style="left:97px;top:474px;width:1px;height:95px;background:#a0a0a0;"></div>
<div class="a" style="left:179px;top:474px;width:1px;height:95px;background:#a0a0a0;"></div>
<div class="a" style="left:429px;top:474px;width:1px;height:95px;background:#a0a0a0;"></div>
<div class="a" style="left:493px;top:474px;width:1px;height:95px;background:#a0a0a0;"></div>
<div class="a" style="left:533px;top:474px;width:1px;height:95px;background:#a0a0a0;"></div>
<div class="a" style="left:657px;top:474px;width:1px;height:95px;background:#a0a0a0;"></div>
<div class="a" style="left:957px;top:474px;width:1px;height:95px;background:#a0a0a0;"></div>
<div class="a" style="left:1237px;top:474px;width:1px;height:95px;background:#a0a0a0;"></div>
<div class="a" style="left:42px;top:569px;width:1290px;height:2px;background:#9a9a9a;"></div>
<div class="a" style="left:43px;top:571px;width:1289px;height:1px;background:#f8f8f8;"></div>
<div class="a" style="left:42px;top:592px;width:1290px;height:1px;background:#a0a0a0;"></div>
<div class="a" style="left:16px;top:592px;width:11px;height:1px;background:#a0a0a0;"></div>
<svg class="a" style="left:46px;top:597px" width="10" height="10" viewBox="0 0 10 10"><rect x="0.5" y="0.5" width="9" height="9" rx="1" fill="#f4f4f4" stroke="#8c8c8c"/><path d="M2 4.5 H8" stroke="#2c4a7a" stroke-width="1"/></svg>
<div class="a t" style="left:58.71px;top:596.69px;font-size:11px;line-height:11px;color:#000;transform:scaleX(0.9826);">Nro Nota Fiscal : 0000008299</div>
<div class="a" style="left:57px;top:610px;width:1275px;height:19px;background:#ffffff;"></div>
<div class="a" style="left:57px;top:610px;width:1275px;height:1px;background:#a0a0a0;"></div>
<div class="a" style="left:16px;top:610px;width:11px;height:1px;background:#a0a0a0;"></div>
<div class="a t" style="left:59.15px;top:614.69px;font-size:11px;line-height:11px;color:#000;transform:scaleX(1.0478);">002</div>
<div class="a t" style="left:99.96px;top:614.69px;font-size:11px;line-height:11px;color:#000;transform:scaleX(1.0087);">5102-02-1</div>
<div class="a" style="left:180px;top:610px;width:249px;height:19px;overflow:hidden">
<div class="a t" style="left:0.89px;top:4.69px;font-size:11px;line-height:11px;color:#000;transform:scaleX(0.8972);">REVENDA SIMPLES NACIONAL - SEM PERMISSAO A</div>
</div>
<div class="a t" style="left:431.58px;top:614.69px;font-size:11px;line-height:11px;color:#000;transform:scaleX(0.9986);">Ativa</div>
<div class="a t" style="left:523.53px;top:614.69px;font-size:11px;line-height:11px;color:#000;transform:scaleX(1.1597);">1</div>
<div class="a t" style="left:535.36px;top:614.69px;font-size:11px;line-height:11px;color:#000;transform:scaleX(1.0182);">000.000.000-00</div>
<div class="a t" style="left:658.80px;top:614.69px;font-size:11px;line-height:11px;color:#000;transform:scaleX(0.8995);">CLIENTE BALCÃO</div>
<div class="a t" style="left:958.80px;top:614.69px;font-size:11px;line-height:11px;color:#000;transform:scaleX(0.8995);">CLIENTE BALCÃO</div>
<div class="a t" style="left:1239.27px;top:614.69px;font-size:11px;line-height:11px;color:#000;transform:scaleX(0.9965);">0000001641</div>
<div class="a" style="left:57px;top:610px;width:1px;height:19px;background:#a0a0a0;"></div>
<div class="a" style="left:97px;top:610px;width:1px;height:19px;background:#a0a0a0;"></div>
<div class="a" style="left:179px;top:610px;width:1px;height:19px;background:#a0a0a0;"></div>
<div class="a" style="left:429px;top:610px;width:1px;height:19px;background:#a0a0a0;"></div>
<div class="a" style="left:493px;top:610px;width:1px;height:19px;background:#a0a0a0;"></div>
<div class="a" style="left:533px;top:610px;width:1px;height:19px;background:#a0a0a0;"></div>
<div class="a" style="left:657px;top:610px;width:1px;height:19px;background:#a0a0a0;"></div>
<div class="a" style="left:957px;top:610px;width:1px;height:19px;background:#a0a0a0;"></div>
<div class="a" style="left:1237px;top:610px;width:1px;height:19px;background:#a0a0a0;"></div>
<div class="a" style="left:42px;top:629px;width:1290px;height:2px;background:#9a9a9a;"></div>
<div class="a" style="left:43px;top:631px;width:1289px;height:1px;background:#f8f8f8;"></div>
<div class="a" style="left:16px;top:641px;width:1316px;height:2px;background:#9a9a9a;"></div>
<div class="a" style="left:16px;top:664px;width:1316px;height:1px;background:#a0a0a0;"></div>
<div class="a" style="left:17px;top:666px;width:16px;height:17px;background:#fcfcfc;border:1px solid #d6d6d6;box-sizing:border-box;border-radius:3px;"></div>
<svg class="a" style="left:17px;top:666px" width="16" height="17" viewBox="0 0 16 17"><rect x="3" y="5" width="1.6" height="7.5" fill="#333"/><path d="M4.5 8.75 L8.5 5 V12.5 Z M8.3 8.75 L12.3 5 V12.5 Z" fill="#333"/></svg>
<div class="a" style="left:35px;top:666px;width:16px;height:17px;background:#fcfcfc;border:1px solid #d6d6d6;box-sizing:border-box;border-radius:3px;"></div>
<svg class="a" style="left:35px;top:666px" width="16" height="17" viewBox="0 0 16 17"><path d="M5.8 8.75 L9.8 5 V12.5 Z" fill="#333"/></svg>
<div class="a" style="left:53px;top:666px;width:16px;height:17px;background:#f8f8f8;border:1px solid #e8e8e8;box-sizing:border-box;border-radius:3px;"></div>
<svg class="a" style="left:53px;top:666px" width="16" height="17" viewBox="0 0 16 17"><path d="M10 8.75 L6 5 V12.5 Z" fill="#aaa"/></svg>
<div class="a" style="left:71px;top:666px;width:16px;height:17px;background:#f8f8f8;border:1px solid #e8e8e8;box-sizing:border-box;border-radius:3px;"></div>
<svg class="a" style="left:71px;top:666px" width="16" height="17" viewBox="0 0 16 17"><rect x="11.5" y="5" width="1.6" height="7.5" fill="#aaa"/><path d="M11.6 8.75 L7.6 5 V12.5 Z M7.8 8.75 L3.8 5 V12.5 Z" fill="#aaa"/></svg>
<div class="a" style="left:89px;top:666px;width:16px;height:17px;background:#fcfcfc;border:1px solid #d6d6d6;box-sizing:border-box;border-radius:3px;"></div>
<svg class="a" style="left:89px;top:666px" width="16" height="17" viewBox="0 0 16 17"><rect x="4" y="5.5" width="7.5" height="2.5" fill="#fbe0b0" stroke="#e07b1a" stroke-width="1"/><path d="M4 8 H11.5 L9 10 V12.5 H6.5 V10 Z" fill="#e8731a"/></svg>
<div class="a" style="left:107px;top:666px;width:16px;height:17px;background:#fcfcfc;border:1px solid #d6d6d6;box-sizing:border-box;border-radius:3px;"></div>
<svg class="a" style="left:107px;top:666px" width="16" height="17" viewBox="0 0 16 17"><path d="M3.5 4 L12.5 13 M12.5 4 L3.5 13" stroke="#1f8a2a" stroke-width="2.2"/></svg>
<div class="a" style="left:125px;top:666px;width:16px;height:17px;background:#fcfcfc;border:1px solid #d6d6d6;box-sizing:border-box;border-radius:3px;"></div>
<svg class="a" style="left:125px;top:666px" width="16" height="17" viewBox="0 0 16 17"><path d="M4 4 V13 M4 8 H7 M4 11 H7 M4 13.5 H7" stroke="#888" stroke-width="1"/><rect x="2.5" y="3" width="6" height="2" fill="#4a7ab0"/><rect x="7" y="6" width="7" height="2.5" fill="#4a7ab0"/><rect x="7" y="9.3" width="7" height="2.5" fill="#4a7ab0"/><rect x="7" y="12.5" width="7" height="2" fill="#4a7ab0"/></svg>
<div class="a" style="left:143px;top:666px;width:16px;height:17px;background:#fcfcfc;border:1px solid #d6d6d6;box-sizing:border-box;border-radius:3px;"></div>
<svg class="a" style="left:143px;top:666px" width="16" height="17" viewBox="0 0 16 17"><rect x="3" y="3.5" width="10" height="10" fill="#7b3fa6"/><rect x="4.5" y="4.5" width="7" height="4.5" fill="#f4eef8"/><rect x="6" y="11" width="4" height="2.5" fill="#e8dcf0"/></svg>
<div class="a" style="left:161px;top:666px;width:16px;height:17px;background:#fcfcfc;border:1px solid #d6d6d6;box-sizing:border-box;border-radius:3px;"></div>
<svg class="a" style="left:161px;top:666px" width="16" height="17" viewBox="0 0 16 17"><path d="M2.5 6 H6 L7 5 H11 V13 H2.5 Z" fill="#e8c67d"/><path d="M9 9 L13 9 M11.5 7.5 L13.3 9 L11.5 10.5" stroke="#3d6ea6" stroke-width="1.3" fill="none"/></svg>
<div class="a" style="left:179px;top:666px;width:16px;height:17px;background:#fcfcfc;border:1px solid #d6d6d6;box-sizing:border-box;border-radius:3px;"></div>
<svg class="a" style="left:179px;top:666px" width="16" height="17" viewBox="0 0 16 17"><path d="M5 6 A4.2 4.2 0 1 1 4.5 11" fill="none" stroke="#3d6ea6" stroke-width="2"/><path d="M3 3.5 V8 H7.5 Z" fill="#3d6ea6"/></svg>
<div class="a" style="left:197px;top:666px;width:16px;height:17px;background:#fcfcfc;border:1px solid #d6d6d6;box-sizing:border-box;border-radius:3px;"></div>
<svg class="a" style="left:197px;top:666px" width="16" height="17" viewBox="0 0 16 17"><rect x="3.5" y="4.5" width="9" height="9" fill="#eef0fa" stroke="#7c88c0" stroke-width="1"/><path d="M5.5 9 H10.5 M8 6.5 V11.5" stroke="#2a3fa0" stroke-width="1.6"/></svg>
<div class="a" style="left:215px;top:666px;width:16px;height:17px;background:#fcfcfc;border:1px solid #d6d6d6;box-sizing:border-box;border-radius:3px;"></div>
<svg class="a" style="left:215px;top:666px" width="16" height="17" viewBox="0 0 16 17"><rect x="3.5" y="4.5" width="9" height="9" fill="#eef0fa" stroke="#7c88c0" stroke-width="1"/><path d="M5.5 9 H10.5" stroke="#2a3fa0" stroke-width="1.6"/></svg>
<div class="a" style="left:299px;top:673px;width:212px;height:4px;background:#8a8a8a;"></div>
<div class="a" style="left:0px;top:701px;width:1365px;height:1px;background:#d8d8d8;"></div>
<div class="a" style="left:199px;top:703px;width:1px;height:17px;background:#d0d0d0;"></div>
<div class="a" style="left:549px;top:703px;width:1px;height:17px;background:#d0d0d0;"></div>
<div class="a" style="left:899px;top:703px;width:1px;height:17px;background:#d0d0d0;"></div>
<div class="a" style="left:1049px;top:703px;width:1px;height:17px;background:#d0d0d0;"></div>
<div class="a" style="left:1169px;top:703px;width:1px;height:17px;background:#d0d0d0;"></div>
<div class="a t" style="left:1.73px;top:705.84px;font-size:12px;line-height:12px;color:#000;transform:scaleX(0.9430);">Usuário: UNICODE</div>
<div class="a t" style="left:203.67px;top:705.84px;font-size:12px;line-height:12px;color:#000;transform:scaleX(0.9403);">Banco de Dados: DB LIMPO / Versão: 2024.12.02</div>
<div class="a t" style="left:553.77px;top:705.84px;font-size:12px;line-height:12px;color:#000;transform:scaleX(0.9075);">001 - UNICODE SOFTWARE</div>
<div class="a t" style="left:903.10px;top:705.84px;font-size:12px;line-height:12px;color:#000;transform:scaleX(0.9192);">BD: 1813</div>
<div class="a t" style="left:1173.61px;top:705.84px;font-size:12px;line-height:12px;color:#000;transform:scaleX(0.9624);">Conectado - 15sec  -  Plano Empresa</div>
</body></html>
